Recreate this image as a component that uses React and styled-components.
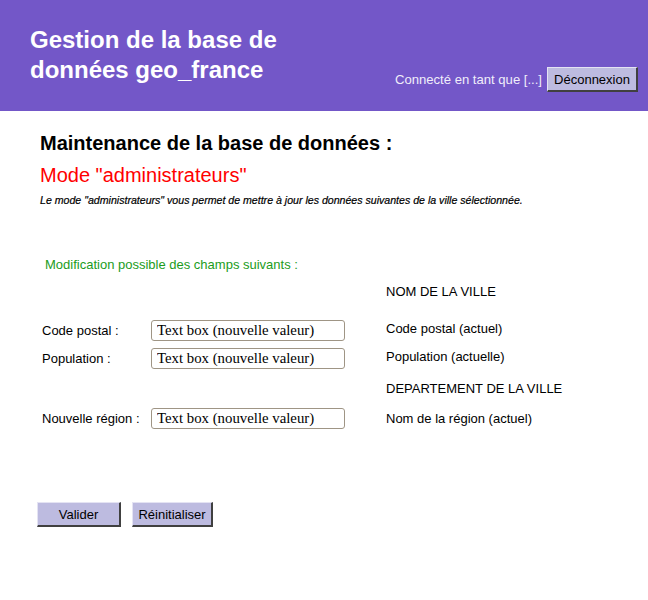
import React from "react";
import styled, { createGlobalStyle } from "styled-components";

const Global = createGlobalStyle`
  html, body { margin: 0; padding: 0; background: #ffffff; }
  body { font-family: "Liberation Sans", Arial, sans-serif; color: #000; }
  * { box-sizing: border-box; }
`;

const Header = styled.header`
  height: 111px;
  background: #7357c8;
  display: flex;
  justify-content: space-between;
  align-items: flex-start;
  padding: 25px 10px 0 30px;
`;

const Title = styled.h1`
  margin: 0;
  font-size: 24px;
  line-height: 30px;
  font-weight: bold;
  color: #ffffff;
`;

const UserBox = styled.div`
  display: flex;
  align-items: center;
  gap: 5px;
  margin-top: 42px;
`;

const UserText = styled.span`
  font-size: 13.1px;
  color: #f0eefa;
`;

const Button = styled.button`
  font-family: "Liberation Sans", Arial, sans-serif;
  font-size: 13px;
  color: #000;
  background: #bdbbe0;
  height: 25px;
  width: ${(p) => p.$w}px;
  padding: 0;
  border-style: solid;
  border-width: 1px 2px 2px 1px;
  border-color: #e4e3f3 #404040 #404040 #e4e3f3;
  border-radius: 0;
  cursor: pointer;
`;

const Main = styled.main`
  padding: 0 0 0 40px;
`;

const Heading = styled.h2`
  margin: 0;
  padding-top: 20px;
  font-size: 20px;
  line-height: 24px;
  font-weight: bold;
`;

const Mode = styled.h3`
  margin: 8px 0 0;
  font-size: 20px;
  line-height: 24px;
  font-weight: normal;
  color: #ff0000;
`;

const Note = styled.p`
  margin: 6px 0 0;
  font-size: 10.6px;
  line-height: 14px;
  font-style: italic;
  color: #000;
  -webkit-text-stroke: 0.2px #000;
`;

const Green = styled.p`
  margin: 50px 0 0 5px;
  font-size: 13px;
  line-height: 16px;
  color: #1c9c1c;
`;

const Form = styled.div`
  margin-left: 2px;
  display: flex;
  flex-direction: column;
`;

const Row = styled.div`
  display: grid;
  grid-template-columns: 109px 235px 1fr;
  align-items: center;
  height: ${(p) => p.$h}px;
  margin-top: ${(p) => p.$mt}px;
  font-size: 13px;
`;

const Label = styled.span`
  font-size: 13px;
`;

const Current = styled.span`
  font-size: 13px;
  margin-top: ${(p) => p.$shift || 0}px;
`;

const Input = styled.input`
  width: 194px;
  height: 21px;
  border: 1px solid #9f9585;
  border-radius: 3px;
  padding: 0 0 0 5px;
  font-family: "Liberation Serif", "Times New Roman", serif;
  font-size: 14.8px;
  color: #000;
  background: #fff;
  &::placeholder { color: #000; opacity: 1; }
`;

const Actions = styled.div`
  display: flex;
  gap: 11px;
  margin: 73px 0 0 -3px;
`;

export default function App() {
  return (
    <>
      <Global />
      <Header>
        <Title>
          Gestion de la base de
          <br />
          données geo_france
        </Title>
        <UserBox>
          <UserText>Connecté en tant que [...]</UserText>
          <Button $w={91}>Déconnexion</Button>
        </UserBox>
      </Header>
      <Main>
        <Heading>Maintenance de la base de données :</Heading>
        <Mode>Mode "administrateurs"</Mode>
        <Note>
          Le mode "administrateurs" vous permet de mettre à jour les données suivantes de la ville sélectionnée.
        </Note>
        <Green>Modification possible des champs suivants :</Green>
        <Form>
          <Row $h={22} $mt={7}>
            <span />
            <span />
            <Current>NOM DE LA VILLE</Current>
          </Row>
          <Row $h={21} $mt={18}>
            <Label>Code postal :</Label>
            <Input placeholder="Text box (nouvelle valeur)" />
            <Current $shift={-4}>Code postal (actuel)</Current>
          </Row>
          <Row $h={21} $mt={7}>
            <Label>Population :</Label>
            <Input placeholder="Text box (nouvelle valeur)" />
            <Current $shift={-4}>Population (actuelle)</Current>
          </Row>
          <Row $h={22} $mt={8}>
            <span />
            <span />
            <Current>DEPARTEMENT DE LA VILLE</Current>
          </Row>
          <Row $h={21} $mt={9}>
            <Label>Nouvelle région :</Label>
            <Input placeholder="Text box (nouvelle valeur)" />
            <Current>Nom de la région (actuel)</Current>
          </Row>
        </Form>
        <Actions>
          <Button $w={84}>Valider</Button>
          <Button $w={81}>Réinitialiser</Button>
        </Actions>
      </Main>
    </>
  );
}
